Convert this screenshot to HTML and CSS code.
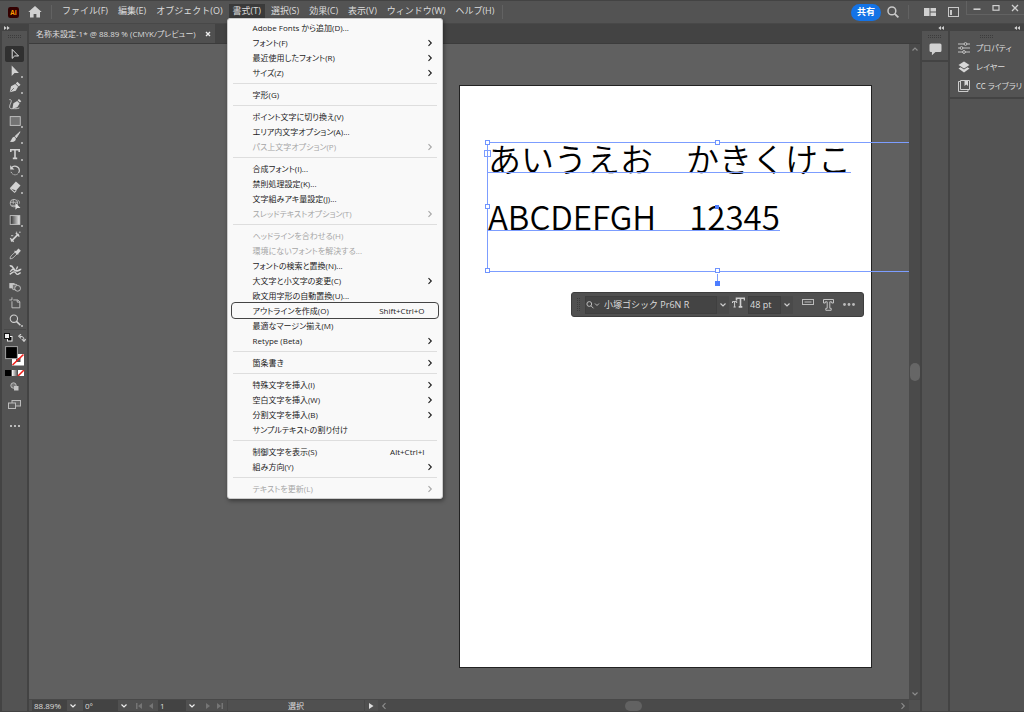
FILE: index.html
```html
<!DOCTYPE html>
<html lang="ja">
<head>
<meta charset="utf-8">
<title>名称未設定-1</title>
<link rel="stylesheet" href="styles.css">
</head>
<body>
<svg class="defs" aria-hidden="true">
  <symbol id="right" viewBox="0 0 6 8"><path d="M1.5 1.2 4.3 4 1.5 6.8" fill="none" stroke="currentColor" stroke-width="1.1"/></symbol>
  <symbol id="down" viewBox="0 0 8 6"><path d="M1.5 1.5 4 4 6.5 1.5" fill="none" stroke="currentColor" stroke-width="1.2"/></symbol>
  <symbol id="grip" viewBox="0 0 14 3"><path d="M0 .5h14M0 2.5h14" stroke="#3c3c3c" stroke-dasharray="1 1"/></symbol>
  <symbol id="collapse" viewBox="0 0 6 4"><path d="M3 0v4L.3 2zM6 0v4L3.3 2z" fill="#d0d0d0"/></symbol>
</svg>

<header class="topbar">
  <svg class="logo" viewBox="0 0 12 12" aria-hidden="true"><rect width="12" height="12" rx="2.5" fill="#330000"/><text x="6" y="8.6" text-anchor="middle" class="logo-text">Ai</text></svg>
  <button class="icon-button" aria-label="ホーム"><svg width="14" height="12" viewBox="0 0 14 12"><path d="M7 0 .3 6H2v5.5h3.6V8h2.8v3.5H12V6h1.7z" fill="#d0d0d0"/></svg></button>
  <span class="divider"></span>
  <nav class="menubar">
    <button>ファイル(F)</button>
    <button>編集(E)</button>
    <button>オブジェクト(O)</button>
    <div class="menu-host">
      <button class="open" aria-haspopup="true" aria-expanded="true">書式(T)</button>
      <div class="menu" role="menu">
        <button role="menuitem">Adobe Fonts から追加(D)...</button>
        <button role="menuitem">フォント(F)<svg><use href="#right"/></svg></button>
        <button role="menuitem">最近使用したフォント(R)<svg><use href="#right"/></svg></button>
        <button role="menuitem">サイズ(Z)<svg><use href="#right"/></svg></button>
        <hr>
        <button role="menuitem">字形(G)</button>
        <hr>
        <button role="menuitem">ポイント文字に切り換え(V)</button>
        <button role="menuitem">エリア内文字オプション(A)...</button>
        <button role="menuitem" disabled>パス上文字オプション(P)<svg><use href="#right"/></svg></button>
        <hr>
        <button role="menuitem">合成フォント(I)...</button>
        <button role="menuitem">禁則処理設定(K)...</button>
        <button role="menuitem">文字組みアキ量設定(J)...</button>
        <button role="menuitem" disabled>スレッドテキストオプション(T)<svg><use href="#right"/></svg></button>
        <hr>
        <button role="menuitem" disabled>ヘッドラインを合わせる(H)</button>
        <button role="menuitem" disabled>環境にないフォントを解決する...</button>
        <button role="menuitem">フォントの検索と置換(N)...</button>
        <button role="menuitem">大文字と小文字の変更(C)<svg><use href="#right"/></svg></button>
        <button role="menuitem">欧文用字形の自動置換(U)...</button>
        <button role="menuitem" class="current">アウトラインを作成(O)<kbd>Shift+Ctrl+O</kbd></button>
        <button role="menuitem">最適なマージン揃え(M)</button>
        <button role="menuitem">Retype (Beta)<svg><use href="#right"/></svg></button>
        <hr>
        <button role="menuitem">箇条書き<svg><use href="#right"/></svg></button>
        <hr>
        <button role="menuitem">特殊文字を挿入(I)<svg><use href="#right"/></svg></button>
        <button role="menuitem">空白文字を挿入(W)<svg><use href="#right"/></svg></button>
        <button role="menuitem">分割文字を挿入(B)<svg><use href="#right"/></svg></button>
        <button role="menuitem">サンプルテキストの割り付け</button>
        <hr>
        <button role="menuitem">制御文字を表示(S)<kbd>Alt+Ctrl+I</kbd></button>
        <button role="menuitem">組み方向(Y)<svg><use href="#right"/></svg></button>
        <hr>
        <button role="menuitem" disabled>テキストを更新(L)<svg><use href="#right"/></svg></button>
      </div>
    </div>
    <button>選択(S)</button>
    <button>効果(C)</button>
    <button>表示(V)</button>
    <button>ウィンドウ(W)</button>
    <button>ヘルプ(H)</button>
  </nav>
  <span class="divider after-menu"></span>
  <div class="actions">
    <button class="share">共有</button>
    <button class="icon-button" aria-label="検索"><svg width="12" height="12" viewBox="0 0 12 12"><circle cx="4.9" cy="4.9" r="3.9" fill="none" stroke="#c8c8c8" stroke-width="1.5"/><path d="m7.8 7.8 3.6 3.6" stroke="#c8c8c8" stroke-width="1.8"/></svg></button>
    <span class="divider"></span>
    <button class="icon-button" aria-label="ドキュメントの配置"><svg width="12" height="8" viewBox="0 0 12 8"><path d="M0 0h5.5v8H0zM6.5 0H12v3.5H6.5zM6.5 4.5H12V8H6.5z" fill="#d0d0d0"/></svg></button>
    <button class="icon-button" aria-label="ワークスペース"><svg width="11" height="10" viewBox="0 0 11 10"><rect x=".5" y=".5" width="10" height="9" fill="none" stroke="#c8c8c8"/><path d="M2 3h2v5H2z" fill="#c8c8c8"/></svg></button>
  </div>
  <div class="window-buttons">
    <button aria-label="最小化"><svg width="8" height="8" viewBox="0 0 8 8"><path d="M.5 5.2h7" stroke="#d0d0d0" stroke-width="1.6"/></svg></button>
    <button aria-label="最大化"><svg width="8" height="8" viewBox="0 0 8 8"><rect x="1" y="1.6" width="6" height="4.6" fill="none" stroke="#d0d0d0" stroke-width="1.2"/></svg></button>
    <button aria-label="閉じる"><svg width="8" height="8" viewBox="0 0 8 8"><path d="m1 1 6 6M7 1 1 7" stroke="#d0d0d0" stroke-width="1.3"/></svg></button>
  </div>
</header>

<div class="workspace">
  <aside class="toolbar">
    <div class="rail-head left"><svg class="flip" width="6" height="4"><use href="#collapse"/></svg></div>
    <svg class="grip" width="14" height="3"><use href="#grip"/></svg>
    <div class="tools">
      <button class="active" aria-label="選択ツール"><svg viewBox="0 0 16 16"><path d="M4.8 2.8v10.2l2.9-2.8 4.4.1z" fill="none" stroke="#e6e6e6" stroke-width="1.1"/></svg></button>
      <button class="more" aria-label="ダイレクト選択ツール"><svg viewBox="0 0 16 16"><path d="M4.2 1.8v12l3.3-3.4h5z" fill="#d2d2d2"/></svg></button>
      <button class="more" aria-label="ペンツール"><svg viewBox="0 0 16 16"><path d="M2 14 3.500 7 8.300 4.500l3.200 3.200-2.600 4.700z" fill="#d2d2d2"/><path d="m8.900 3.900 1.800-2 3.600 3.500-2 1.900z" fill="#d2d2d2"/><path d="m2.800 13.200 4-4" stroke="#535353" stroke-width=".8"/></svg></button>
      <button aria-label="曲線ツール"><svg viewBox="0 0 16 16"><path d="M5 13.500 6.200 7l4.300-2.500 2.800 2.800-2.700 4.300z" fill="#d2d2d2"/><path d="m11 3.800 1.500-1.600 2.700 2.600-1.600 1.600z" fill="#d2d2d2"/><path d="M1.500 3c2.400-.5 2.800 1.500 1.500 4.200C1 11.500 1.500 14 5.500 13.300c3 0 4.500.5 7.500-.8" fill="none" stroke="#d2d2d2"/></svg></button>
      <button class="more" aria-label="長方形ツール"><svg viewBox="0 0 16 16"><rect x="2.500" y="3" width="11.500" height="10" fill="#737373" stroke="#c8c8c8"/></svg></button>
      <button class="more" aria-label="ブラシツール"><svg viewBox="0 0 16 16"><path d="m13.800 2-5.700 5.200 1.500 1.700z" fill="#d2d2d2" stroke="#d2d2d2"/><path d="M7.300 7.800 9 9.600c.2 3-3 4.800-7 3.600C4.600 12 3.800 8.500 7.300 7.800z" fill="#d2d2d2"/></svg></button>
      <button class="more" aria-label="文字ツール"><svg viewBox="0 0 16 16"><path d="M3.200 5.800V3.200h9.600v2.600M8 3.200v9.800M5.500 13h5" fill="none" stroke="#d2d2d2" stroke-width="1.800"/></svg></button>
      <button class="more" aria-label="回転ツール"><svg viewBox="0 0 16 16"><path d="M4 5.500C6.500 2 13 3.500 13 8.500c0 1-.4 2-1 2.700" fill="none" stroke="#d2d2d2" stroke-width="1.300"/><path d="M11 12.500c-3 2.500-7.500.2-7.800-3.500" fill="none" stroke="#d2d2d2" stroke-dasharray="1.500 1"/><path d="M2.500 2.500v5h4.800z" fill="#d2d2d2"/></svg></button>
      <button class="more" aria-label="消しゴムツール"><svg viewBox="0 0 16 16"><path d="m2 9.500 7-7.700 5.300 4.600-5 5.500z" fill="#d2d2d2"/><path d="m2.500 9.600 5 4.500 2-2.300" fill="none" stroke="#d2d2d2" stroke-width="1.200"/></svg></button>
      <button aria-label="シェイプ形成ツール"><svg viewBox="0 0 16 16"><circle cx="6.800" cy="7" r="4.300" fill="none" stroke="#c2c2c2"/><path d="M2.500 6h8.500M6 3v5M4 9.500h5M11 3.500c2 1 2.500 2.500 2 4" fill="none" stroke="#c2c2c2" stroke-width=".9"/><path d="M8.500 6.500v8l2-2h3.700z" fill="#dedede"/></svg></button>
      <button class="more" aria-label="グラデーションツール"><svg viewBox="0 0 16 16"><defs><linearGradient id="shade"><stop stop-color="#2c2c2c"/><stop offset="1" stop-color="#eee"/></linearGradient></defs><rect x="2.500" y="3" width="11" height="10" fill="url(#shade)" stroke="#c8c8c8"/></svg></button>
      <button aria-label="スターツール"><svg viewBox="0 0 16 16"><path d="m3.500 13 8.500-8.500" stroke="#d2d2d2" stroke-width="2"/><path d="m2.500 9.500 4 4M9 3.500l4 4" stroke="#d2d2d2" stroke-width="1.500"/><path d="M3.500 6.500H6M12.500 2.500h2M9 2.500h1.500" stroke="#d2d2d2"/></svg></button>
      <button aria-label="スポイトツール"><svg viewBox="0 0 16 16"><path d="M2.500 13.500c0-2.500.5-3 5.500-7.500l2.200 2C5.500 13 5 13.200 2.500 13.500z" fill="#535353" stroke="#d2d2d2"/><path d="m7.500 4.500 4.200 4M9 6l3-3.300 1.800 1.600-3 3.300z" fill="#d2d2d2" stroke="#d2d2d2" stroke-width="1.300"/></svg></button>
      <button aria-label="パペットワープツール"><svg viewBox="0 0 16 16"><path d="M2 3.500c2-.8 3.200.5 4 2.500 1.500 3 4 3.500 6 2.500 1.200-.6 2.500-.6 2.500-2" fill="none" stroke="#d2d2d2" stroke-width="2"/><path d="M2.500 10c1.500-2.500 3-3.500 5-2.500M2 13c3-2 5-4.500 7-1.500s3.500.5 5.500-.5M9.500 7.500 11 4" fill="none" stroke="#d2d2d2" stroke-width="1.500"/></svg></button>
      <button aria-label="ブレンドツール"><svg viewBox="0 0 16 16"><path d="M1.500 3.500h6v6h-6z" fill="#c8c8c8"/><rect x="5" y="5" width="5.500" height="6" rx="1.500" fill="#777" stroke="#c8c8c8"/><circle cx="11" cy="9.500" r="3.300" fill="#535353" stroke="#c8c8c8"/></svg></button>
      <button aria-label="アートボードツール"><svg viewBox="0 0 16 16"><path d="M4.500 1.500v3M1.500 4.500h3M4.500 6v7.500h9V6.500l-2.500-2H6" fill="none" stroke="#c8c8c8"/><path d="M10.500 4.500v2.500h3" fill="none" stroke="#c8c8c8"/></svg></button>
      <button class="more" aria-label="ズームツール"><svg viewBox="0 0 16 16"><circle cx="6.700" cy="6.500" r="4.200" fill="none" stroke="#d2d2d2" stroke-width="1.200"/><path d="m9.600 9.500 4.600 4.500" stroke="#d2d2d2" stroke-width="1.800"/></svg></button>
    </div>
    <div class="swap">
      <button aria-label="初期設定の塗りと線"><svg width="9" height="9" viewBox="0 0 9 9"><rect x="3.500" y="3.500" width="4.500" height="4.500" fill="#000" stroke="#eee"/><rect x=".5" y=".5" width="5" height="5" fill="#eee" stroke="#111"/></svg></button>
      <button aria-label="塗りと線を入れ替え"><svg width="8" height="8" viewBox="0 0 8 8"><path d="M2 2.200c3 0 4 .8 4 4M3 0 .7 2.200 3 4.400M3.800 5 6 7.400 8 5" fill="none" stroke="#ccc" stroke-width="1.100"/></svg></button>
    </div>
    <button class="paint" aria-label="塗りと線"><svg width="20" height="20" viewBox="0 0 20 20"><rect x="7" y="8" width="12" height="11.500" fill="#fff"/><rect x="11" y="12" width="4.500" height="4" fill="#535353"/><path d="M7.500 19 18.500 8.500" stroke="#f0201c" stroke-width="1.600"/><rect x=".6" y=".6" width="11.800" height="12" fill="#000" stroke="#a0a0a0"/></svg></button>
    <button class="paint-kinds" aria-label="カラー、グラデーション、なし"><svg width="20" height="6" viewBox="0 0 20 6"><defs><linearGradient id="fade"><stop stop-color="#fff"/><stop offset="1" stop-color="#666"/></linearGradient></defs><path d="M0 0h6v6H0z"/><path d="M7 0h5v6H7z" fill="url(#fade)"/><path d="M13 0h6v6h-6z" fill="#fff"/><path d="m13 6 6-6" stroke="#f0201c" stroke-width="1.500"/></svg></button>
    <button class="draw-mode" aria-label="描画方法"><svg width="9" height="9" viewBox="0 0 9 9"><circle cx="3.500" cy="3.500" r="2.700" fill="#777" stroke="#bbb"/><path d="M4 4h4.500v4.500H4z" fill="#c4c4c4"/></svg></button>
    <button class="screen-mode" aria-label="スクリーンモード"><svg width="13" height="9" viewBox="0 0 13 9"><rect x="4" y=".5" width="8.500" height="5.500" fill="#666" stroke="#bbb"/><rect x=".5" y="3" width="7" height="5.500" fill="#5c5c5c" stroke="#bbb"/></svg></button>
    <button class="edit-tools" aria-label="ツールバーを編集"><svg width="10" height="2" viewBox="0 0 10 2"><path d="M0 0h2v2H0zM4 0h2v2H4zM8 0h2v2H8z" fill="#bbb"/></svg></button>
  </aside>

  <main class="document">
    <div class="tabs"><div class="tab"><span>名称未設定-1* @ 88.89 % (CMYK/プレビュー)</span><button aria-label="閉じる"><svg width="6" height="6" viewBox="0 0 6 6"><path d="m1 1 4 4M5 1 1 5" stroke="#eee" stroke-width="1.400"/></svg></button></div></div>
    <div class="stage">
      <div class="canvas">
        <div class="artboard"></div>
        <div class="text-frame">
          <p>あいうえお　かきくけこ</p>
          <p>ABCDEFGH　12345</p>
          <i class="handle top-left"></i><i class="handle mid-left"></i><i class="handle bottom-left"></i>
          <i class="handle top-mid"></i><i class="handle bottom-mid"></i>
          <i class="port"></i><i class="centre"></i><i class="stem"></i>
        </div>
        <form class="type-bar">
          <svg class="bar-grip" width="3" height="14" viewBox="0 0 3 14"><path d="M.5 0v14M2.500 0v14" stroke="#3c3c3c" stroke-dasharray="1 1"/></svg>
          <label class="field font"><svg width="14" height="8" viewBox="0 0 14 8"><circle cx="3.300" cy="3" r="2.400" fill="none" stroke="#bbb"/><path d="m5 4.800 2.500 2.500M9 2.500l2 2 2-2" fill="none" stroke="#bbb"/></svg><input type="text" value="小塚ゴシック Pr6N R" aria-label="フォント"></label>
          <button type="button" class="drop" aria-label="フォント一覧"><svg width="8" height="6"><use href="#down"/></svg></button>
          <svg class="size-icon" width="13" height="12" viewBox="0 0 13 12"><path d="M4.500 3.500V1.200h8v2.300M8.500 1.200v8.600M6.700 9.900h3.600" fill="none" stroke="#d0d0d0" stroke-width="1.600"/><path d="M.5 6V4.600h4.200V6M2.600 4.600v5.300M1.500 10h2.200" fill="none" stroke="#d0d0d0"/></svg>
          <label class="field size"><input type="text" value="48 pt" aria-label="フォントサイズ"></label>
          <button type="button" class="drop" aria-label="サイズ一覧"><svg width="8" height="6"><use href="#down"/></svg></button>
          <button type="button" class="plain raised" aria-label="エリア内文字"><svg width="12" height="6" viewBox="0 0 12 6"><rect x=".5" y=".5" width="11" height="5" fill="none" stroke="#bbb"/><path d="M2.500 3h7" stroke="#bbb"/></svg></button>
          <button type="button" class="plain" aria-label="アウトラインを作成"><svg width="11" height="12" viewBox="0 0 11 12"><path d="M.5.500h10v3.500H8.700V2.800H6.800v6.500h1.400v2H2.800v-2h1.400V2.800H2.300V4H.5z" fill="none" stroke="#c2c2c2"/></svg></button>
          <button type="button" class="plain" aria-label="その他"><svg width="12" height="3" viewBox="0 0 12 3"><circle cx="1.500" cy="1.500" r="1.400" fill="#bbb"/><circle cx="6" cy="1.500" r="1.400" fill="#bbb"/><circle cx="10.500" cy="1.500" r="1.400" fill="#bbb"/></svg></button>
        </form>
      </div>
      <div class="scroll-y"><svg class="turn" width="8" height="6"><use href="#down"/></svg><i></i><svg width="8" height="6"><use href="#down"/></svg></div>
    </div>
    <footer class="status">
      <input class="zoom" type="text" value="88.89%" aria-label="ズーム"><button class="drop" aria-label="ズーム一覧"><svg width="8" height="6"><use href="#down"/></svg></button>
      <input class="angle" type="text" value="0°" aria-label="回転"><button class="drop" aria-label="角度一覧"><svg width="8" height="6"><use href="#down"/></svg></button>
      <button class="step first" disabled aria-label="最初"><svg width="7" height="6" viewBox="0 0 7 6"><path d="M0 0h1.500v6H0zM6 0v6L2 3z" fill="#757575"/></svg></button>
      <button class="step" disabled aria-label="前へ"><svg width="7" height="6" viewBox="0 0 7 6"><path d="M5 0v6L1 3z" fill="#757575"/></svg></button>
      <input class="page" type="text" value="1" aria-label="アートボード"><button class="drop" aria-label="アートボード一覧"><svg width="8" height="6"><use href="#down"/></svg></button>
      <button class="step next" disabled aria-label="次へ"><svg width="7" height="6" viewBox="0 0 7 6"><path d="M2 0v6l4-3z" fill="#757575"/></svg></button>
      <button class="step" disabled aria-label="最後"><svg width="7" height="6" viewBox="0 0 7 6"><path d="M1 0v6l4-3zM5.500 0H7v6H5.500z" fill="#757575"/></svg></button>
      <span class="tool-name">選択</span>
      <button class="play" aria-label="表示項目"><svg width="5" height="6" viewBox="0 0 5 6"><path d="M0 0v6l4.500-3z" fill="#ddd"/></svg></button>
      <div class="scroll-x"><svg class="turn" width="6" height="8"><use href="#right"/></svg><i></i><svg width="6" height="8"><use href="#right"/></svg></div>
      <span class="corner"></span>
    </footer>
  </main>

  <aside class="comments">
    <div class="rail-head"><svg width="6" height="4"><use href="#collapse"/></svg></div>
    <div class="panel-group"><svg class="grip" width="14" height="3"><use href="#grip"/></svg>
      <button aria-label="コメント"><svg width="13" height="13" viewBox="0 0 13 13"><path d="M2 .5h9q1.500 0 1.500 1.500v5.500Q12.500 9 11 9H6.500l-3.600 3.200V9H2Q.5 9 .5 7.500V2Q.5.500 2 .5z" fill="#d2d2d2"/></svg></button></div>
  </aside>
  <aside class="panels">
    <div class="rail-head"><svg width="6" height="4"><use href="#collapse"/></svg></div>
    <div class="panel-group"><svg class="grip" width="14" height="3"><use href="#grip"/></svg>
      <button><svg width="12" height="12" viewBox="0 0 12 12"><path d="M0 2h12M0 6h12M0 10h12" stroke="#c4c4c4"/><g fill="#535353" stroke="#c4c4c4"><circle cx="7.500" cy="2" r="1.400"/><circle cx="3.500" cy="6" r="1.400"/><circle cx="6" cy="10" r="1.400"/></g></svg>プロパティ</button>
      <button><svg width="12" height="12" viewBox="0 0 12 12"><path d="m6 .5 5.500 3.500L6 7.500.5 4z" fill="#d6d6d6"/><path d="m.5 7.500 2-1.200L6 8.600l3.500-2.300 2 1.200L6 11.500z" fill="#d6d6d6"/></svg>レイヤー</button>
      <button><svg width="12" height="12" viewBox="0 0 12 12"><path d="M2.500.5h9v9h-9zM2.500 1.500h-2v10h9.500v-2" fill="none" stroke="#ccc"/><path d="M6.500 1h3.500v5L8.300 4.500 6.500 6z" fill="#d6d6d6"/></svg>CC ライブラリ</button></div>
  </aside>
</div>
</body>
</html>
```

FILE: styles.css
```css
* { box-sizing: border-box; }

body {
  margin: 0;
  height: 100vh;
  display: flex;
  flex-direction: column;
  overflow: hidden;
  background: #434343;
  color: #dcdcdc;
  font: 9px/12px "Open Sans", "Noto Sans CJK JP", sans-serif;
}

button, input {
  margin: 0;
  padding: 0;
  border: 0;
  background: none;
  color: inherit;
  font: inherit;
}

svg { display: block; flex: none; }
.defs { position: absolute; width: 0; height: 0; }
.turn, .flip { transform: rotate(180deg); }

/* Top bar */
.topbar {
  display: flex;
  align-items: center;
  flex: none;
  height: 24px;
  padding-left: 8px;
  background: #535353;
  border-top: 1px solid #434343;
  border-bottom: 1px solid #484848;
}
.logo { width: 11px; height: 11px; margin-right: 9px; }
.logo-text { fill: #ff9a00; font: bold 7px "Open Sans", sans-serif; }
.divider { width: 1px; height: 14px; margin-left: 9px; background: #626262; }
.menubar { display: flex; gap: 2px; margin-left: 6px; padding-bottom: 2px; }
.menubar > button, .menu-host > button { padding: 0 4px; height: 14px; line-height: 14px; white-space: nowrap; }
.menu-host { position: relative; }
.menu-host > .open { display: block; background: #3a3a3a; }
.after-menu { margin-left: 4px; }
.actions { display: flex; align-items: center; margin-left: auto; }
.share {
  width: 30px;
  height: 17px;
  margin-right: 6px;
  border-radius: 9px;
  background: #1473e6;
  color: #fff;
  font-weight: bold;
}
.actions .divider { margin: 0 15px 0 9px; }
.actions .icon-button + .icon-button { margin-left: 12px; }
.window-buttons {
  display: flex;
  align-self: flex-start;
  margin-left: 7px;
  border: 1px solid #626262;
  border-width: 0 0 1px 1px;
}
.window-buttons button { width: 19px; height: 13px; display: grid; place-items: center; }

/* Drop-down menu */
.menu {
  position: absolute;
  z-index: 10;
  top: 100%;
  left: -2px;
  width: 216px;
  padding: 1px 4px 2px;
  display: flex;
  flex-direction: column;
  background: #f9f9f9;
  border: 1px solid #ccc;
  border-radius: 3px;
  box-shadow: 1px 2px 4px #0006;
  color: #1c1c1c;
  font-size: 8px;
  font-feature-settings: "palt";
}
.menu button {
  display: flex;
  align-items: center;
  height: 15px;
  padding: 0 5px 0 21px;
  border-radius: 3px;
  white-space: nowrap;
}
.menu button:disabled { color: #a6a6a6; }
.menu .current { outline: 1px solid #444; outline-offset: 0; }
.menu svg { width: 6px; height: 8px; margin-left: auto; }
.menu kbd { margin: 0 8px 0 auto; font: inherit; }
.menu hr { width: 204px; height: 1px; margin: 3px 1px; border: 0; background: #dedede; }

/* Columns */
.workspace { display: flex; flex: 1; min-height: 0; gap: 2px; padding: 0 0 1px 2px; }
.rail-head { display: flex; align-items: center; justify-content: flex-end; height: 7px; padding-right: 4px; background: #434343; }
.rail-head.left { justify-content: flex-start; padding: 0 0 0 2px; }
.grip { margin: 4px auto 0; }

/* Tools */
.toolbar { width: 25px; display: flex; flex-direction: column; align-items: center; background: #535353; }
.toolbar .rail-head { align-self: stretch; }
.tools { display: flex; flex-direction: column; justify-content: space-between; height: 282px; margin-top: 8px; }
.tools button { position: relative; width: 19px; height: 16px; display: grid; place-items: center; border-radius: 2px; }
.tools svg { width: 14px; height: 14px; }
.tools .active { background: #303030; }
.more::after {
  content: "";
  position: absolute;
  right: 1px;
  bottom: 1px;
  border: 1px solid #a8a8a8;
}
.swap { display: flex; gap: 5px; align-items: center; margin-top: 1px; padding-top: 3px; border-top: 1px solid #484848; }
.paint { margin-top: 4px; }
.paint-kinds { margin-top: 4px; }
.draw-mode { margin-top: 6px; }
.screen-mode { margin-top: 9px; }
.edit-tools { margin-top: 16px; }

/* Document */
.document { flex: 1; min-width: 0; display: flex; flex-direction: column; }
.tabs { display: flex; height: 20px; border-bottom: 1px solid #3c3c3c; }
.tab { display: flex; align-items: center; gap: 9px; padding: 0 4px 0 7px; background: #505050; font-size: 8px; font-feature-settings: "palt"; }
.stage { flex: 1; min-height: 0; display: flex; }
.canvas { position: relative; flex: 1; min-width: 0; overflow: hidden; background: #606060; }
.artboard { position: absolute; left: 430px; top: 41px; width: 413px; height: 583px; background: #fff; border: 1px solid #222; }

.text-frame {
  position: absolute;
  left: 458px;
  top: 98px;
  right: -1px;
  height: 130px;
  border: 1px solid #7c9dff;
  color: #000;
  font: 350 33px/30px "Noto Sans CJK JP", sans-serif;
}
.text-frame p { position: relative; width: max-content; margin: 0 0 28px; }
.text-frame p::after { content: ""; position: absolute; left: 0; right: 0; bottom: 0; height: 1px; background: #7c9dff; }
.handle { position: absolute; width: 3px; height: 3px; background: #fff; outline: 1px solid #6f94ff; margin: -2px; }
.top-left { left: 0; top: 0; }
.mid-left { left: 0; top: 50%; }
.bottom-left { left: 0; top: 100%; }
.top-mid { left: 230px; top: 0; }
.bottom-mid { left: 230px; top: 100%; }
.port { position: absolute; left: -4px; top: 7px; width: 7px; height: 7px; border: 1px solid #7c9dff; }
.centre { position: absolute; left: 227px; top: 62px; width: 4px; height: 4px; background: #4d7dff; }
.stem { position: absolute; left: 227px; top: 138px; width: 5px; height: 5px; background: #4d7dff; }
.stem::before { content: ""; position: absolute; left: 2px; bottom: 100%; width: 1px; height: 7px; background: #7c9dff; }

.type-bar {
  position: absolute;
  left: 542px;
  top: 248px;
  height: 25px;
  display: flex;
  align-items: center;
  padding: 0 8px 0 5px;
  border: 1px solid #3e3e3e;
  border-radius: 3px;
  background: #505050;
  font-size: 9px;
}
.field { display: flex; align-items: center; height: 18px; background: #444; border: 1px solid #3f3f3f; }
.field input { min-width: 0; flex: 1; }
.font { width: 132px; margin-left: 5px; gap: 4px; }
.size { width: 33px; margin-left: 3px; padding-left: 1px; }
.drop { display: grid; place-items: center; width: 12px; height: 18px; color: #ccc; background: #4a4a4a; }
.size-icon { margin-left: 3px; margin-bottom: 4px; }
.plain { margin-left: 9px; }
.raised { padding-bottom: 5px; }

.scroll-y { display: flex; flex-direction: column; align-items: center; justify-content: space-between; width: 11px; padding: 2px 0; background: #4a4a4a; color: #8c8c8c; }
.scroll-y i { width: 10px; height: 18px; border-radius: 5px; background: #666; }

/* Status bar */
.status { display: flex; align-items: center; height: 12px; padding-left: 3px; background: #505050; border-top: 1px solid #484848; font-size: 8px; }
.status input { height: 11px; padding-left: 2px; background: #434343; }
.status .drop { height: 11px; background: #505050; color: #eee; }
.zoom { width: 35px; }
.angle { width: 35px; margin-left: 4px; }
.page { width: 28px; margin-left: 1px; }
.step { width: 12px; display: grid; place-items: center; }
.first, .next { margin-left: 3px; }
.tool-name { width: 146px; margin-left: 2px; text-align: center; border-left: 1px solid #484848; border-right: 1px solid #484848; }
.tool-name { flex: 0 1 138px; }
.play { width: 13px; display: grid; place-items: center; }
.scroll-x { flex: 1; display: flex; align-items: center; justify-content: space-between; height: 11px; padding: 0 3px; background: #4a4a4a; color: #8c8c8c; }
.scroll-x i { width: 17px; height: 10px; margin-right: 20px; border-radius: 5px; background: #626262; }
.corner { width: 11px; }

/* Right-hand rails */
.comments { width: 26px; background: #535353; }
.panels { width: 74px; background: #535353; }
.panel-group { display: flex; flex-direction: column; border-bottom: 2px solid #434343; }
.comments button { display: grid; place-items: center; height: 22px; }
.panels button { display: flex; align-items: center; gap: 6px; height: 19px; padding-left: 8px; font: 8px/12px "Noto Sans CJK JP", sans-serif; font-feature-settings: "palt"; white-space: nowrap; }
.panels .panel-group { padding-bottom: 2px; }
```
